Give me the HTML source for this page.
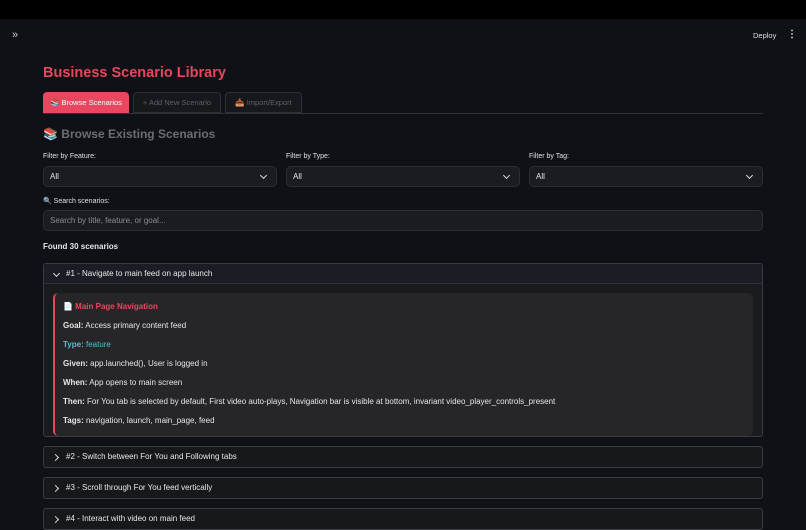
<!DOCTYPE html>
<html><head><meta charset="utf-8"><style>
*{margin:0;padding:0;box-sizing:border-box}
body{width:806px;height:523px;overflow:hidden;background:#0f1116;font-family:"Liberation Sans","Noto Sans CJK SC",sans-serif;color:#e6e6e6;position:relative;font-size:8px}
.a{position:absolute}
.top{left:0;top:0;width:806px;height:19px;background:#000}
.title{left:43px;top:65px;font-size:14.5px;font-weight:bold;color:#e8465c}
.tab{top:92px;height:21px;border-radius:4px 4px 0 0;border:1px solid #2e3036;background:#17181c;color:#5e6066;font-size:7.5px;text-align:center;line-height:19px}
.line{left:43px;top:113px;width:720px;height:1px;background:#2e3036}
.h2{left:43px;top:127px;font-size:12px;font-weight:bold;color:#6b6d74}
.lbl{font-size:7px;color:#e0e0e0}
.sel{top:166px;height:21px;width:234px;background:#1b1c21;border:1px solid #2c2e34;border-radius:5px;font-size:8px;padding-left:6px;line-height:19px}
.sel:after{content:"";position:absolute;right:10px;top:6px;width:4px;height:4px;border-right:1.5px solid #ddd;border-bottom:1.5px solid #ddd;transform:rotate(45deg)}
.inp{left:43px;top:210px;width:720px;height:21px;background:#1b1c21;border:1px solid #2c2e34;border-radius:5px;font-size:8px;color:#8a8c92;padding-left:6px;line-height:19px}
.exp{left:43px;width:720px;border:1px solid #3a3c42;border-radius:3px;background:#17181c}
.eh{height:20px;line-height:20px;padding-left:22px;font-size:8px;position:relative;color:#e8e8e8}
.eh:before{content:"";position:absolute;left:9px;top:8px;width:4px;height:4px;border-right:1.2px solid #ddd;border-bottom:1.2px solid #ddd;transform:rotate(-45deg)}
.eh.open:before{transform:rotate(45deg);top:7px;left:10px}
.inner{left:53px;top:293px;width:700px;height:143px;background:#262629;border-left:2px solid #e8465c;border-radius:5px;padding:9px 0 0 8px;font-size:8px}
.inner div{height:19px}
b{font-weight:bold}
</style></head><body>
<div class="a top"></div>
<div class="a" style="left:12px;top:29px;font-size:11px;color:#ccc">»</div>
<div class="a" style="left:753px;top:31px;font-size:7.5px;color:#ddd">Deploy</div>
<div class="a" style="left:787px;top:29px;font-size:10px;color:#ddd;font-weight:bold">⋮</div>
<div class="a title">Business Scenario Library</div>
<div class="a tab" style="left:43px;width:86px;background:#e8475f;border-color:#e8475f;color:#fff">📚 Browse Scenarios</div>
<div class="a tab" style="left:133px;width:88px">+ Add New Scenario</div>
<div class="a tab" style="left:225px;width:77px">📥 Import/Export</div>
<div class="a line"></div>
<div class="a h2">📚 Browse Existing Scenarios</div>
<div class="a lbl" style="left:43px;top:153px">Filter by Feature:</div>
<div class="a lbl" style="left:286px;top:153px">Filter by Type:</div>
<div class="a lbl" style="left:529px;top:153px">Filter by Tag:</div>
<div class="a sel" style="left:43px">All</div>
<div class="a sel" style="left:286px">All</div>
<div class="a sel" style="left:529px">All</div>
<div class="a lbl" style="left:43px;top:197px">🔍 Search scenarios:</div>
<div class="a inp">Search by title, feature, or goal...</div>
<div class="a" style="left:43px;top:242px;font-size:8px;font-weight:bold">Found 30 scenarios</div>
<div class="a exp" style="top:263px;height:174px;background:#1a1b1f"><div class="eh open" style="background:#1b1d25;border-bottom:1px solid #2e3036">#1 - Navigate to main feed on app launch</div></div>
<div class="a inner">
<div style="color:#e8465c;font-weight:bold">📄 Main Page Navigation</div>
<div><b>Goal:</b> Access primary content feed</div>
<div style="color:#4fc3c9"><b>Type:</b> feature</div>
<div><b>Given:</b> app.launched(), User is logged in</div>
<div><b>When:</b> App opens to main screen</div>
<div><b>Then:</b> For You tab is selected by default, First video auto-plays, Navigation bar is visible at bottom, invariant video_player_controls_present</div>
<div><b>Tags:</b> navigation, launch, main_page, feed</div>
</div>
<div class="a exp" style="top:446px;height:22px"><div class="eh">#2 - Switch between For You and Following tabs</div></div>
<div class="a exp" style="top:477px;height:22px"><div class="eh">#3 - Scroll through For You feed vertically</div></div>
<div class="a exp" style="top:508px;height:22px"><div class="eh">#4 - Interact with video on main feed</div></div>
</body></html>
